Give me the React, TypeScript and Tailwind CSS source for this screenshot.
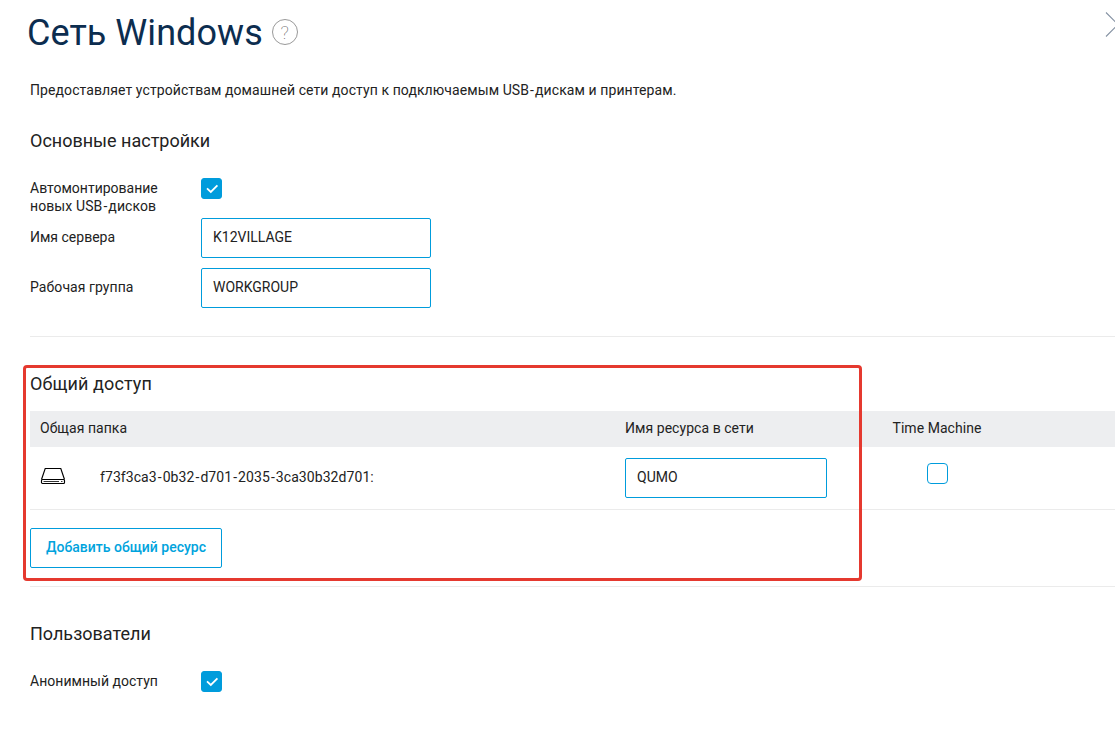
import { Fragment, useState } from "react";

interface CheckboxProps {
    checked: boolean;
    onChange: (checked: boolean) => void;
    label: string;
}

interface TextFieldProps {
    value: string;
    onChange: (value: string) => void;
    label: string;
    className: string;
}

function Checkbox({ checked, onChange, label }: CheckboxProps) {
    return (
        <button
            type="button"
            role="checkbox"
            aria-checked={checked}
            aria-label={label}
            onClick={() => onChange(!checked)}
            className={`block size-[21px] shrink-0 border border-[#009cdc] ${
                checked ? "rounded-[3px] bg-[#009cdc]" : "rounded-[4px] bg-white"
            }`}
        >
            {checked && (
                <svg viewBox="0 0 19 19" className="block size-[19px]">
                    <path
                        d="M5 9.4 L8.8 13 L15.4 6.4"
                        fill="none"
                        stroke="#fff"
                        strokeWidth="1.8"
                    />
                </svg>
            )}
        </button>
    );
}

function TextField({ value, onChange, label, className }: TextFieldProps) {
    return (
        <input
            type="text"
            aria-label={label}
            value={value}
            onChange={(e) => onChange(e.target.value)}
            className={`block h-10 rounded-[2px] border border-[#009cdc] bg-white px-[11px] pb-[2px] text-[14px] outline-none ${className}`}
        />
    );
}

// Roboto's hyphen is narrow, so give it a little room on both sides
function Hyphenated({ text }: { text: string }) {
    return (
        <span className="whitespace-nowrap">
            {text.split("-").map((part, i) => (
                <Fragment key={i}>
                    {i > 0 && <span className="mx-px">-</span>}
                    {part}
                </Fragment>
            ))}
        </span>
    );
}

function DiskIcon() {
    return (
        <svg
            viewBox="0 0 26 18"
            className="block h-[18px] w-[26px]"
            fill="none"
            stroke="#000"
            strokeWidth="1.15"
        >
            <path d="M1.5 12.5 L5.2 1.5 H20.8 L24.5 12.5" />
            <rect x="1.5" y="12.5" width="23" height="4" rx="1" />
            <path d="M3.5 14.5 H19 M21 14.5 H22.5" strokeWidth="0.8" />
        </svg>
    );
}

export default function App() {
    const [automount, setAutomount] = useState(true);
    const [anonymous, setAnonymous] = useState(true);
    const [timeMachine, setTimeMachine] = useState(false);
    const [serverName, setServerName] = useState("K12VILLAGE");
    const [workgroup, setWorkgroup] = useState("WORKGROUP");
    const [shareName, setShareName] = useState("QUMO");

    return (
        <main className="relative h-[738px] w-[1115px] overflow-hidden bg-white pl-[30px] font-['Roboto',sans-serif] text-[14px] leading-[18px] text-[#222]">
            <header className="flex h-[81px] items-start pt-[13px]">
                <h1 className="-ml-[3px] text-[36px] leading-10 tracking-[0.05px] whitespace-nowrap text-[#0c2d4f]">
                    Сеть Windows
                </h1>
                <button
                    type="button"
                    className="mt-[6px] ml-[9px] flex size-[26px] items-center justify-center rounded-full border border-[#999] text-[19px] font-thin leading-none text-[#444]"
                >
                    ?
                </button>
                <button
                    type="button"
                    aria-label="Закрыть"
                    className="absolute top-3 left-[1105px] h-[26px] w-[10px] overflow-hidden"
                >
                    <svg viewBox="0 0 26 26" className="block h-[26px] w-[26px]">
                        <path
                            d="M1 0.5 L25 24.5 M1 24.5 L25 0.5"
                            fill="none"
                            stroke="#8592a3"
                            strokeWidth="1.1"
                        />
                    </svg>
                </button>
            </header>

            <p className="tracking-[0.09px]">
                Предоставляет устройствам домашней сети доступ к подключаемым{" "}
                <Hyphenated text="USB-дискам" /> и принтерам.
            </p>

            <section className="mt-[30px] h-[208px] border-b border-[#ebebeb]">
                <h2 className="text-[18px] leading-6">Основные настройки</h2>
                <div className="mt-[25px] flex h-10 items-start">
                    <div className="w-[171px] pt-px">
                        Автомонтирование
                        <br />
                        <span className="tracking-[0.1px]">
                            новых <Hyphenated text="USB-дисков" />
                        </span>
                    </div>
                    <Checkbox
                        checked={automount}
                        onChange={setAutomount}
                        label="Автомонтирование"
                    />
                </div>
                <div className="flex flex-col gap-[10px]">
                    <div className="flex items-start">
                        <div className="w-[171px] pt-[10px]">Имя сервера</div>
                        <TextField
                            value={serverName}
                            onChange={setServerName}
                            label="Имя сервера"
                            className="w-[230px]"
                        />
                    </div>
                    <div className="flex items-start">
                        <div className="w-[171px] pt-[10px] tracking-[0.07px]">
                            Рабочая группа
                        </div>
                        <TextField
                            value={workgroup}
                            onChange={setWorkgroup}
                            label="Рабочая группа"
                            className="w-[230px]"
                        />
                    </div>
                </div>
            </section>

            <section className="relative h-[250px] border-b border-[#ebebeb] pt-[35px]">
                <h2 className="text-[18px] leading-6 tracking-[0.12px]">
                    Общий доступ
                </h2>
                <div className="mt-[15px] grid h-9 grid-cols-[585px_258px_1fr] bg-[#edeef0] pt-2 pl-[10px] tracking-[0.05px]">
                    <span>Общая папка</span>
                    <span>Имя ресурса в сети</span>
                    <span className="pl-[9.5px]">Time Machine</span>
                </div>
                <div className="grid h-[63px] grid-cols-[60px_525px_258px_1fr] border-b border-[#ebebeb] pl-[10px]">
                    <div className="pt-5">
                        <DiskIcon />
                    </div>
                    <div className="pt-[21px] tracking-[0.07px]">
                        <Hyphenated text="f73f3ca3-0b32-d701-2035-3ca30b32d701:" />
                    </div>
                    <div className="pt-[11px]">
                        <TextField
                            value={shareName}
                            onChange={setShareName}
                            label="Имя ресурса в сети"
                            className="w-[202px]"
                        />
                    </div>
                    <div className="pt-4 pl-[44px]">
                        <Checkbox
                            checked={timeMachine}
                            onChange={setTimeMachine}
                            label="Time Machine"
                        />
                    </div>
                </div>
                <button
                    type="button"
                    className="mt-[18px] block h-10 w-[192px] rounded-[2px] border border-[#009cdc] pb-[2px] text-[14px] font-medium whitespace-nowrap text-[#00a3dd]"
                >
                    Добавить общий ресурс
                </button>
                {/* highlight frame around the sharing block */}
                <div className="pointer-events-none absolute top-[28px] -left-[7px] h-[216px] w-[839px] rounded-[4px] border-3 border-[#e5392f]" />
            </section>

            <section className="pt-[35px]">
                <h2 className="text-[18px] leading-6">Пользователи</h2>
                <div className="mt-[25px] flex items-start">
                    <div className="w-[171px] pt-px tracking-[0.03px]">
                        Анонимный доступ
                    </div>
                    <Checkbox
                        checked={anonymous}
                        onChange={setAnonymous}
                        label="Анонимный доступ"
                    />
                </div>
            </section>
        </main>
    );
}
